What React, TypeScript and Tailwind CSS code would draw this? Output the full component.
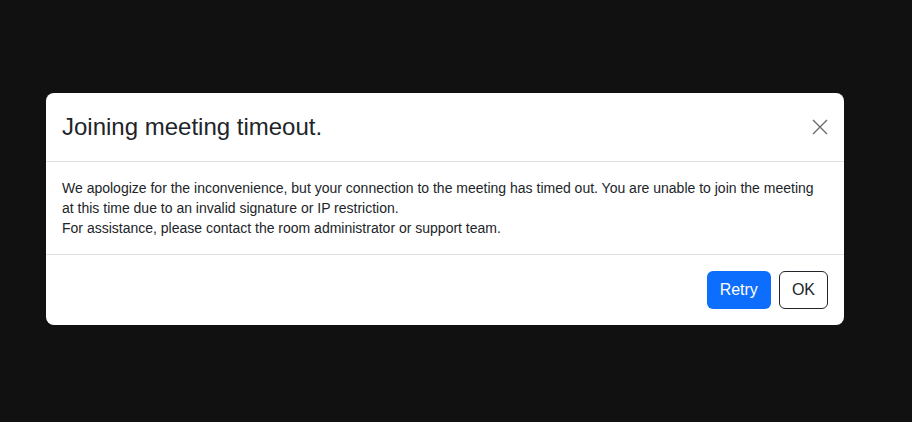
export default function App() {
  return (
    <div
      className="h-[422px] w-[912px] bg-[#111111] pt-[93px] pl-[46px]"
      style={{ fontFamily: '"Liberation Sans", Arial, sans-serif' }}
    >
      <div className="w-[798px] rounded-[8px] bg-white text-[#212529]">
        <div className="flex items-center justify-between border-b border-[#dee2e6] px-4 py-4">
          <h5 className="text-[24px] leading-[36px] font-normal">Joining meeting timeout.</h5>
          <button className="flex h-6 w-4 items-center justify-center text-[#6c6c6c]">
            <svg width="16" height="16" viewBox="0 0 16 16" fill="none" stroke="currentColor" strokeWidth="1.4">
              <path d="M1 1 L15 15 M15 1 L1 15" />
            </svg>
          </button>
        </div>
        <div className="px-4 py-4 text-[14px] leading-[20px]">
          <p>
            We apologize for the inconvenience, but your connection to the meeting has timed out. You are unable to join the meeting
            at this time due to an invalid signature or IP restriction.
          </p>
          <p>For assistance, please contact the room administrator or support team.</p>
        </div>
        <div className="flex items-center justify-end gap-2 border-t border-[#dee2e6] px-4 py-4">
          <button className="h-[38px] rounded-[6px] bg-[#0d6efd] px-[13px] text-[16px] text-white">Retry</button>
          <button className="h-[38px] rounded-[6px] border border-[#212529] bg-white px-3 text-[16px] text-[#212529]">
            OK
          </button>
        </div>
      </div>
    </div>
  );
}
